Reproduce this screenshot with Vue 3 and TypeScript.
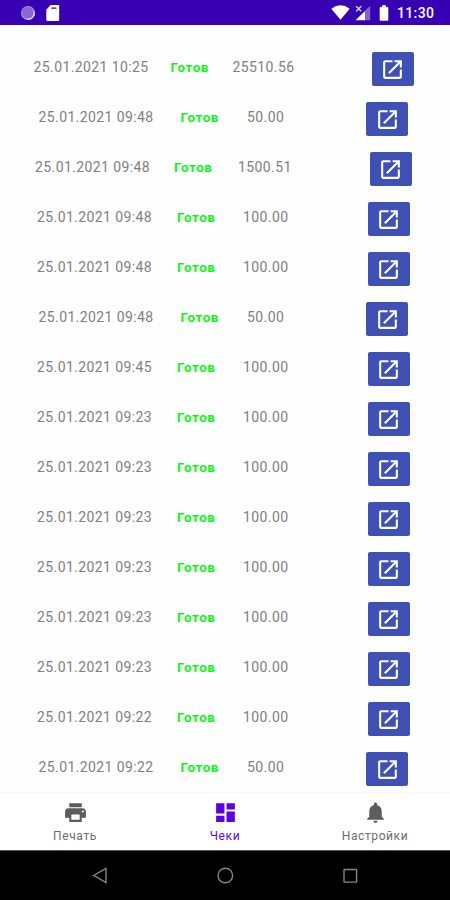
<script setup lang="ts">
interface Receipt {
  date: string
  amount: string
}

const receipts: Receipt[] = [
  { date: '25.01.2021 10:25', amount: '25510.56' },
  { date: '25.01.2021 09:48', amount: '50.00' },
  { date: '25.01.2021 09:48', amount: '1500.51' },
  { date: '25.01.2021 09:48', amount: '100.00' },
  { date: '25.01.2021 09:48', amount: '100.00' },
  { date: '25.01.2021 09:48', amount: '50.00' },
  { date: '25.01.2021 09:45', amount: '100.00' },
  { date: '25.01.2021 09:23', amount: '100.00' },
  { date: '25.01.2021 09:23', amount: '100.00' },
  { date: '25.01.2021 09:23', amount: '100.00' },
  { date: '25.01.2021 09:23', amount: '100.00' },
  { date: '25.01.2021 09:23', amount: '100.00' },
  { date: '25.01.2021 09:23', amount: '100.00' },
  { date: '25.01.2021 09:22', amount: '100.00' },
  { date: '25.01.2021 09:22', amount: '50.00' },
]
</script>

<template>
  <div class="screen">
    <header class="status">
      <svg class="sync" width="16" height="16" viewBox="0 0 16 16">
        <circle cx="8" cy="8" r="7" fill="#b49ce4" />
        <circle cx="7.5" cy="7.6" r="6" fill="#8b68d2" />
        <path d="M14.2 6.5A6.6 6.6 0 0 1 7 14.4" fill="none" stroke="#d9caf4" stroke-width="1.2" />
      </svg>
      <svg class="card" width="14" height="16" viewBox="0 0 14 16">
        <path d="M4.6 0H12q1.2 0 1.2 1.2v13.6q0 1.2-1.2 1.2H1.4Q.3 16 .3 14.8V4.8z" fill="#fff" />
        <path d="M5.3 3.2h5.2" stroke="#6745b8" stroke-width="1.7" />
      </svg>
      <span class="spacer"></span>
      <svg class="wifi" width="19" height="15" viewBox="0 0 19 15">
        <path d="M.3 3.7Q9.5-3.2 18.7 3.7L9.5 14.8z" fill="#fff" />
      </svg>
      <svg class="signal" width="16" height="16" viewBox="0 0 16 16">
        <path d="M10 5.7 15.2.8v14.4H10z" fill="#8362cf" />
        <path d="M.5 15.2 10 6v9.2z" fill="#fff" />
        <path d="m1.2 1.2 5 5m0-5-5 5" stroke="#e2d8f5" stroke-width="1.3" />
      </svg>
      <svg class="battery" width="10" height="16" viewBox="0 0 10 16">
        <path d="M3 .3h4v1.6h1.3q1 0 1 1v11.8q0 1-1 1H1.7q-1 0-1-1V2.9q0-1 1-1H3z" fill="#fff" />
      </svg>
      <span class="clock">11:30</span>
    </header>

    <main class="list">
      <div v-for="(receipt, index) in receipts" :key="index" class="row" :class="`digits-${receipt.amount.length}`">
        <span class="date">{{ receipt.date }}</span>
        <span class="state">Готов</span>
        <span class="amount">{{ receipt.amount }}</span>
        <button class="open" type="button">
          <svg width="25" height="25" viewBox="0 0 24 24">
            <path fill="#fff" d="M19 19H5V5h7V3H5c-1.11 0-2 .9-2 2v14c0 1.1.89 2 2 2h14c1.1 0 2-.9 2-2v-7h-2v7zM14 3v2h3.59l-9.83 9.83 1.41 1.41L19 6.41V10h2V3h-7z" />
          </svg>
        </button>
      </div>
    </main>

    <nav class="tabs">
      <div class="tab">
        <svg width="25" height="25" viewBox="0 0 24 24">
          <path fill="#5c5c5c" d="M19 8H5c-1.66 0-3 1.34-3 3v6h4v4h12v-4h4v-6c0-1.66-1.34-3-3-3zm-3 11H8v-5h8v5zm3-7c-.55 0-1-.45-1-1s.45-1 1-1 1 .45 1 1-.45 1-1 1zm-1-9H6v4h12V3z" />
        </svg>
        <span class="label">Печать</span>
      </div>
      <div class="tab active">
        <svg width="25" height="25" viewBox="0 0 24 24">
          <path fill="#5b00e8" d="M3 13h8V3H3v10zm0 8h8v-6H3v6zm10 0h8V11h-8v10zm0-18v6h8V3h-8z" />
        </svg>
        <span class="label">Чеки</span>
      </div>
      <div class="tab">
        <svg width="25" height="25" viewBox="0 0 24 24">
          <path fill="#5c5c5c" d="M12 22c1.1 0 2-.9 2-2h-4c0 1.1.89 2 2 2zm6-6v-5c0-3.07-1.64-5.64-4.5-6.32V4c0-.83-.67-1.5-1.5-1.5s-1.5.67-1.5 1.5v.68C7.63 5.36 6 7.92 6 11v5l-2 2v1h16v-1l-2-2z" />
        </svg>
        <span class="label">Настройки</span>
      </div>
    </nav>

    <footer class="system">
      <svg width="18" height="18" viewBox="0 0 18 18"><path d="M15 1.5v14L2.8 8.5z" /></svg>
      <svg width="18" height="18" viewBox="0 0 18 18"><circle cx="9.3" cy="8.5" r="7.3" /></svg>
      <svg width="18" height="18" viewBox="0 0 18 18"><rect x="3" y="2.5" width="12.6" height="12.6" rx=".5" /></svg>
    </footer>
  </div>
</template>

<style>
body {
  margin: 0;
  background: #fff;
}
</style>

<style scoped>
.screen {
  width: 450px;
  height: 900px;
  display: flex;
  flex-direction: column;
  overflow: hidden;
  background: #fefefe;
  font-family: Roboto, "Noto Sans", sans-serif;
}

.status {
  height: 25px;
  flex: none;
  box-sizing: border-box;
  display: flex;
  align-items: center;
  padding: 0 16px 0 20px;
  background: #3700b3;
}

.card {
  margin-left: 10px;
}

.spacer {
  flex: 1;
}

.signal {
  margin-left: 5px;
}

.battery {
  margin-left: 8px;
}

.clock {
  width: 37px;
  margin: 0 0 0 8px;
  color: #fff;
  font-size: 14px;
  font-weight: 500;
  line-height: 16px;
  letter-spacing: 0.35px;
  white-space: nowrap;
}

.list {
  flex: 1;
  min-height: 0;
  padding-top: 18px;
  overflow: hidden;
}

.row {
  height: 50px;
  box-sizing: border-box;
  display: grid;
  align-items: center;
  padding-bottom: 2px;
  color: #808080;
  font-size: 14px;
  line-height: 18px;
  letter-spacing: 0.4px;
  white-space: nowrap;
}

.digits-8 {
  padding-left: 33.5px;
  grid-template-columns: 137px 62px 139px 42px;
}

.digits-7 {
  padding-left: 35px;
  grid-template-columns: 139px 64px 131.5px 42px;
}

.digits-6 {
  padding-left: 37px;
  grid-template-columns: 140px 66px 124.5px 42px;
}

.digits-5 {
  padding-left: 38.5px;
  grid-template-columns: 142px 66.5px 119px 42px;
}

.state {
  color: #12f51b;
  font-size: 13.5px;
  font-weight: 700;
  letter-spacing: 0.55px;
}

.open {
  width: 42px;
  height: 34px;
  display: flex;
  align-items: center;
  justify-content: center;
  margin: 4px 0 0;
  padding: 0;
  border: 0;
  border-radius: 2px;
  background: #3f51b5;
}

.tabs {
  height: 58px;
  flex: none;
  box-sizing: border-box;
  display: flex;
  border-top: 1px solid #f7f7f7;
  background: #fff;
}

.tab {
  flex: 1;
  display: flex;
  flex-direction: column;
  align-items: center;
  padding-top: 7px;
  color: #6c6c6c;
}

.active {
  color: #6200ee;
}

.label {
  margin-top: 4px;
  font-size: 12px;
  line-height: 15px;
  letter-spacing: 0.6px;
}

.system {
  height: 50px;
  flex: none;
  box-sizing: border-box;
  display: flex;
  align-items: center;
  gap: 107px;
  padding-left: 91px;
  border-top: 1px solid #555;
  background: #000;
}

.system svg {
  fill: none;
  stroke: #858585;
  stroke-width: 1.4;
}
</style>
